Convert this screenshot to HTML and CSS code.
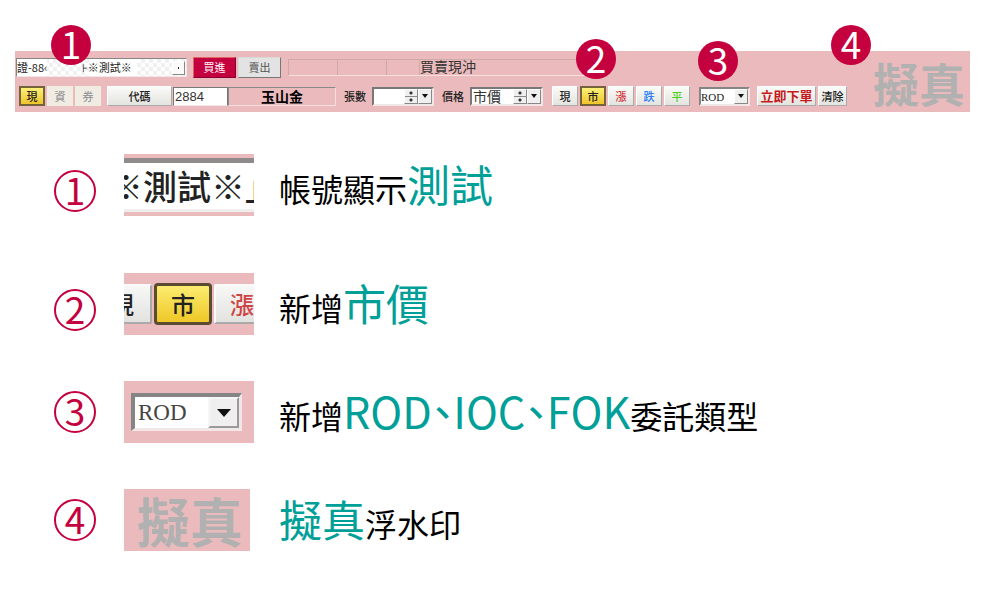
FILE: index.html
```html
<!DOCTYPE html>
<html lang="zh-Hant">
<head>
<meta charset="utf-8">
<meta name="viewport" content="width=device-width, initial-scale=1">
<title>擬真下單說明</title>
<link rel="stylesheet" href="styles.css">
</head>
<body>
<main class="page">
  <section class="order-bar" aria-label="下單列">
    <div class="controls">
      <div class="row row-account">
        <span class="combo combo-account">
          <select class="combo-select" aria-label="帳號"><option>證-88‹&nbsp;&nbsp;&nbsp;&nbsp;&nbsp;&nbsp;&nbsp;&nbsp;&nbsp;&nbsp;&nbsp;&nbsp;&nbsp;&nbsp;⊦※測試※</option></select>
          <span class="combo-dot"></span>
        </span>
        <button class="side side-buy" type="button">買進</button>
        <button class="side side-sell" type="button">賣出</button>
        <div class="status">
          <span class="cell cell-wide"></span>
          <span class="cell cell-wide"></span>
          <span class="cell cell-narrow"></span>
          <span class="cell cell-text">買賣現沖</span>
          <span class="cell cell-last"></span>
        </div>
      </div>
      <div class="row row-order">
        <div class="group group-type">
          <button class="btn btn-active" type="button">現</button>
          <button class="btn btn-off" type="button">資</button>
          <button class="btn btn-off" type="button">券</button>
        </div>
        <div class="group group-stock">
          <button class="btn btn-code" type="button">代碼</button>
          <input class="code" type="text" value="2884" aria-label="股票代碼">
          <output class="stock-name">玉山金</output>
        </div>
        <label class="field" for="qty">張數</label>
        <span class="spin spin-qty">
          <input class="spin-input" id="qty" type="text">
          <span class="stepper"></span>
          <span class="arrow"></span>
        </span>
        <label class="field" for="price">價格</label>
        <span class="spin spin-price">
          <input class="spin-input" id="price" type="text" value="市價">
          <span class="stepper"></span>
          <span class="arrow"></span>
        </span>
        <div class="group group-price">
          <button class="btn" type="button">現</button>
          <button class="btn btn-active" type="button">市</button>
          <button class="btn btn-up" type="button">漲</button>
          <button class="btn btn-down" type="button">跌</button>
          <button class="btn btn-flat" type="button">平</button>
        </div>
        <span class="combo combo-rod">
          <select class="combo-select" aria-label="委託類型"><option>ROD</option><option>IOC</option><option>FOK</option></select>
          <span class="arrow"></span>
        </span>
        <div class="group group-send">
          <button class="btn btn-send" type="button">立即下單</button>
          <button class="btn btn-clear" type="button">清除</button>
        </div>
      </div>
    </div>
    <div class="watermark">擬真</div>
    <span class="badge badge-1">1</span>
    <span class="badge badge-2">2</span>
    <span class="badge badge-3">3</span>
    <span class="badge badge-4">4</span>
  </section>

  <section class="notes">
    <div class="note note-low note-first">
      <span class="num">1</span>
      <div class="thumb thumb-account"><div class="account-text">※測試※｣</div></div>
      <p class="desc">帳號顯示<em class="key">測試</em></p>
    </div>
    <div class="note note-low">
      <span class="num">2</span>
      <div class="thumb thumb-buttons">
        <button class="big-btn big-left" type="button">現</button>
        <button class="big-btn big-active" type="button">市</button>
        <button class="big-btn big-up" type="button">漲</button>
      </div>
      <p class="desc">新增<em class="key">市價</em></p>
    </div>
    <div class="note">
      <span class="num">3</span>
      <div class="thumb thumb-rod">
        <span class="combo combo-big">
          <select class="combo-select" aria-label="委託類型放大"><option>ROD</option><option>IOC</option><option>FOK</option></select>
          <span class="arrow"></span>
        </span>
      </div>
      <p class="desc">新增<em class="key">ROD、IOC、FOK</em>委託類型</p>
    </div>
    <div class="note">
      <span class="num">4</span>
      <div class="thumb thumb-mark">擬真</div>
      <p class="desc"><em class="key">擬真</em>浮水印</p>
    </div>
  </section>
</main>
</body>
</html>
```
FILE: styles.css
```css
:root {
  --pink: #ebbabc;
  --crimson: #c5003e;
  --teal: #009f98;
  --grey: #b1b1b1;
}
* { box-sizing: border-box; }
body {
  margin: 0;
  background: #fff;
  color: #000;
  font-family: "Noto Sans CJK TC", sans-serif;
}
button, input, select { font: inherit; color: inherit; margin: 0; border-radius: 0; }
.page { padding: 51px 35px 40px 15px; }

/* order bar */
.order-bar {
  position: relative;
  display: flex;
  justify-content: space-between;
  align-items: center;
  padding: 6px 5px 6px 1px;
  background: var(--pink);
  font-size: 11px;
  line-height: 16px;
}
.controls { display: flex; flex-direction: column; gap: 9px; }
.row, .group { display: flex; align-items: center; }
.row { height: 20px; }
.row-order { padding-left: 3px; }

.combo { position: relative; display: flex; }
.combo-select {
  appearance: none;
  width: 100%;
  padding: 0 2px;
  border: 2px solid;
  border-color: #858585 #f3e6e6 #f3e6e6 #858585;
  outline: 0;
  background: #fff;
  color: #222;
}
.combo-account { width: 171px; height: 19px; margin-right: 6px; }
.combo-account .combo-select {
  padding: 0;
  border-width: 1px;
  line-height: 15px;
  background:
    linear-gradient(#fff, #fff) 0 0 / 30px 100% no-repeat,
    linear-gradient(#fff, #fff) 72px 0 / 48px 100% no-repeat,
    repeating-conic-gradient(#f0f0f0 0 25%, #fff 0 50%) 0 0 / 8px 8px;
}
.combo-dot {
  position: absolute;
  right: 2px;
  top: 3px;
  bottom: 2px;
  width: 13px;
  border: 1px solid;
  border-color: #fff #888 #888 #fff;
  background: radial-gradient(circle, #222 1px, transparent 1px), #fafafa;
}
.arrow {
  display: flex;
  align-items: center;
  justify-content: center;
  width: 14px;
  border: 1px solid;
  border-color: #fff #888 #888 #fff;
  background: #efefef;
}
.arrow::before {
  content: "";
  border: solid transparent;
  border-width: 4px 3px 0;
  border-top-color: #111;
}
.combo .arrow { position: absolute; right: 2px; top: 2px; bottom: 2px; }

.side {
  width: 43px;
  height: 21px;
  padding: 0;
  border: 1px solid #aaa;
  border-color: #d8d8d8 #777 #777 #d8d8d8;
  background: #e3e3e3;
  color: #555;
}
.side-buy { border-color: #d66 #803 #803 #d66; background: var(--crimson); color: #fff; margin-right: 2px; }

.status {
  display: flex;
  height: 17px;
  margin-left: 7px;
  border: 1px solid;
  border-color: #cda9aa transparent #f8dfdf #cda9aa;
  font-size: 14px;
  line-height: 13px;
}
.cell { border-right: 1px solid #cda9aa; }
.cell-wide { width: 49px; }
.cell-narrow { width: 33px; }
.cell-text { border-right: 0; color: #333; }
.cell-last { width: 108px; border-right: 0; }

.btn {
  width: 26px;
  height: 20px;
  padding: 0;
  border: 1px solid;
  border-color: #fff #aaa #aaa #fff;
  background: linear-gradient(#fafaf8, #e3e3df);
  color: #222;
  font-weight: 500;
}
.group-type { gap: 2px; margin-right: 6px; }
.group-price { gap: 2px; margin-left: 9px; }
.group-send { gap: 2px; margin-left: 7px; }
.btn-active {
  border: 2px solid #74633a;
  background: linear-gradient(#fcef79, #efc529);
}
.btn-off { border-color: #f2ece2; background: #f0ece3; color: #999; }
.btn-code { width: 65px; }
.btn-up { color: #d0343c; }
.btn-down { color: #2d80f5; }
.btn-flat { color: #4bcf1b; }
.btn-send { width: 59px; font-size: 13px; font-weight: 700; color: #c51a20; }
.btn-clear { width: 29px; }

.code {
  width: 55px;
  height: 19px;
  margin-left: 1px;
  padding: 0 1px;
  border: 1px solid;
  border-color: #777 #777 #f3e6e6 #777;
  outline: 0;
  background: #fff;
  color: #333;
  font: 13px "Liberation Sans", sans-serif;
}
.stock-name {
  width: 108px;
  height: 19px;
  border: 1px solid;
  border-color: #888 #f6dede #f6dede #888;
  font-size: 14px;
  font-weight: 700;
  text-align: center;
}
.field { width: 36px; padding-left: 2px; text-align: center; font-weight: 500; color: #222; }
.spin {
  display: flex;
  height: 19px;
  border: 2px solid;
  border-color: #777 #f3e6e6 #f3e6e6 #777;
  background: #fff;
}
.spin-qty { width: 62px; }
.spin-price { width: 73px; }
.spin-input {
  flex: 1;
  width: 0;
  padding: 0 1px;
  border: 0;
  outline: 0;
  background: transparent;
  color: #333;
  font-size: 14px;
}
.stepper {
  width: 14px;
  border: 1px solid;
  border-color: #fff #888 #888 #fff;
  background:
    radial-gradient(circle at 50% 3px, #333 1px, transparent 2px),
    radial-gradient(circle at 50% 10px, #333 1px, transparent 2px),
    linear-gradient(#888, #888) 0 6px / 100% 1px no-repeat,
    #efefef;
}
.combo-rod { width: 51px; height: 19px; margin-left: 9px; }
.combo-rod .combo-select { padding: 0; }
.combo-rod .combo-select, .combo-big .combo-select { font-family: "Liberation Serif", serif; }

.watermark { color: var(--grey); font-size: 46px; line-height: 46px; font-weight: 700; }

.badge {
  position: absolute;
  width: 40px;
  height: 40px;
  border-radius: 50%;
  background: var(--crimson);
  color: #fff;
  font-size: 37px;
  line-height: 36px;
  text-align: center;
}
.badge-1 { left: 36px; top: -26px; }
.badge-2 { left: 561px; top: -12px; }
.badge-3 { left: 683px; top: -10px; }
.badge-4 { right: 99px; top: -26px; }

/* notes */
.notes { display: flex; flex-direction: column; gap: 46px; padding: 42px 0 0 39px; }
.note { display: flex; align-items: center; }
.note-first { margin-bottom: 11px; }
.note-low .num { align-self: flex-end; margin-bottom: 4px; }
.num {
  width: 42px;
  height: 42px;
  border: 2px solid var(--crimson);
  border-radius: 50%;
  color: var(--crimson);
  font-size: 37px;
  line-height: 34px;
  text-align: center;
}
.thumb {
  display: flex;
  align-items: center;
  width: 130px;
  height: 62px;
  margin: 0 25px 0 28px;
  overflow: hidden;
  background: var(--pink);
}
.account-text {
  flex: 1;
  margin: 0 0 0 -15px;
  border-top: 5px solid #8f8b8b;
  border-bottom: 3px solid #eee;
  background: #fff;
  color: #222;
  font-size: 34px;
  line-height: 46px;
  font-weight: 500;
  white-space: nowrap;
}
.thumb-buttons { justify-content: center; gap: 2px; padding-right: 12px; }
.big-btn {
  flex: none;
  width: 60px;
  height: 40px;
  padding: 0;
  border: 2px solid;
  border-color: #fafafa #aaa #aaa #fafafa;
  border-radius: 2px;
  background: linear-gradient(#f7f7f6, #e2e2df);
  color: #222;
  font-size: 24px;
  line-height: 32px;
  font-weight: 500;
}
.big-left { padding-right: 16px; text-align: right; }
.big-active {
  width: 58px;
  height: 42px;
  border: 3px solid #5b4b33;
  border-radius: 4px;
  background: linear-gradient(#fbec70, #efc727);
}
.big-up { padding-right: 4px; color: #cf4545; }
.thumb-rod { padding-left: 7px; }
.combo-big { width: 111px; height: 38px; }
.combo-big .combo-select {
  padding: 0 3px;
  border-width: 4px 3px 3px 4px;
  font-size: 23px;
  color: #444;
}
.combo-big .arrow { width: 31px; right: 3px; top: 4px; bottom: 3px; border-width: 2px; border-color: #f6f6f6 #999 #999 #f6f6f6; }
.combo-big .arrow::before { border-width: 8px 7px 0; }
.thumb-mark {
  width: 126px;
  margin-right: 29px;
  padding-left: 13px;
  color: var(--grey);
  font-size: 53px;
  line-height: 56px;
  font-weight: 700;
  white-space: nowrap;
}
.desc { margin: 0; font-size: 32px; line-height: 56px; font-weight: 400; }
.key {
  color: var(--teal);
  font-size: 43px;
  line-height: 56px;
  font-style: normal;
  font-kerning: none;
  font-feature-settings: "halt";
}
```
